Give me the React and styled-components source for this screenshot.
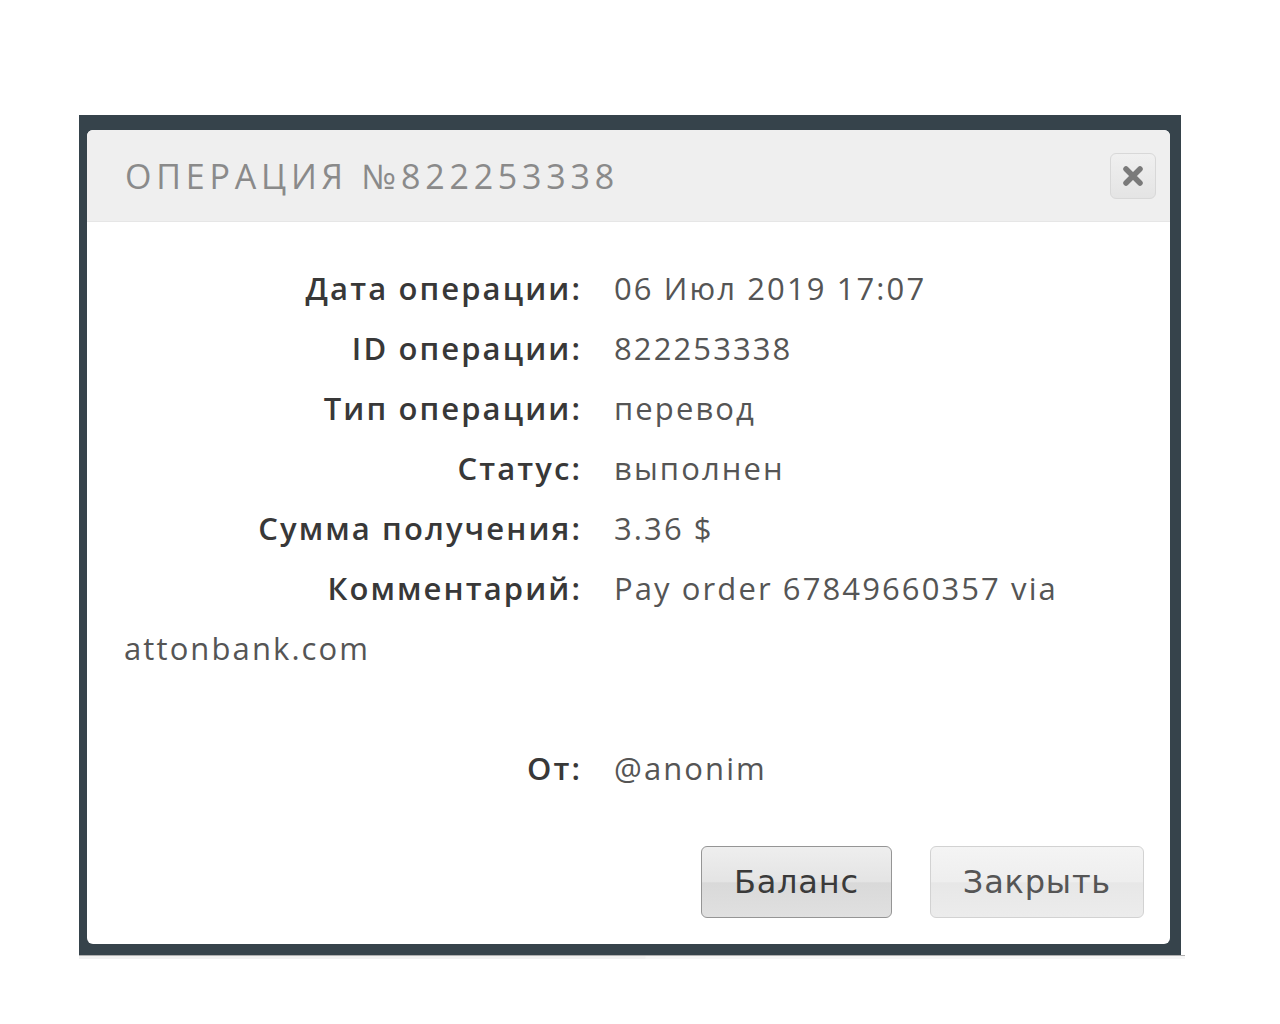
import React from "react";
import styled, { createGlobalStyle } from "styled-components";

const Global = createGlobalStyle`
  html, body { margin: 0; padding: 0; background: #ffffff; }
  body { font-family: "Open Sans", "Noto Sans", sans-serif; }
`;

const Page = styled.div`
  width: 1280px;
  height: 1024px;
  padding-top: 115px;
  box-sizing: border-box;
`;

const Frame = styled.div`
  margin-left: 79px;
  width: 1102px;
  height: 840px;
  box-sizing: border-box;
  background: #36434b;
  padding: 15px 11px 11px 8px;
  display: flex;
`;

const Underline = styled.div`
  margin-left: 79px;
  width: 1106px;
  height: 4px;
  background: linear-gradient(to right, #f1f1f1 0, #f1f1f1 566px, #f6f6f6 567px);
  border-top: 1px solid #b0b0b0;
  box-sizing: border-box;
`;

const Dialog = styled.div`
  flex: 1;
  background: #ffffff;
  border-radius: 6px;
  display: flex;
  flex-direction: column;
  overflow: hidden;
`;

const Header = styled.div`
  height: 92px;
  background: #efefef;
  border-bottom: 1px solid #e6e6e6;
  box-sizing: border-box;
  display: flex;
  align-items: center;
  justify-content: space-between;
  padding: 0 14px 0 38px;
`;

const Title = styled.h2`
  margin: 0;
  font-family: "Open Sans", sans-serif;
  font-weight: 400;
  font-size: 34px;
  letter-spacing: 4.8px;
  color: #8a8a8a;
`;

const CloseBtn = styled.button`
  width: 46px;
  height: 46px;
  border-radius: 6px;
  border: 1px solid #d8d8d8;
  background: linear-gradient(#f0f0f0, #e4e4e4);
  display: flex;
  align-items: center;
  justify-content: center;
  padding: 0;
  cursor: pointer;
`;

const Body = styled.div`
  flex: 1;
  padding: 36px 26px 26px 37px;
  display: flex;
  flex-direction: column;
`;

const Info = styled.div`
  font-size: 31px;
  line-height: 60px;
  letter-spacing: 2.1px;
  color: #555;
`;

const Row = styled.div`
  min-height: 60px;
`;

const Label = styled.span`
  display: inline-block;
  width: 458px;
  text-align: right;
  font-weight: 600;
  color: #383838;
  margin-right: 32px;
`;

const Value = styled.span`
  color: #555;
`;

const Footer = styled.div`
  margin-top: 48px;
  display: flex;
  justify-content: flex-end;
  gap: 38px;
`;

const Button = styled.button`
  height: 72px;
  padding: 0 32px;
  border-radius: 6px;
  border: 1px solid ${(p) => (p.$primary ? "#959595" : "#d2d2d2")};
  background: ${(p) =>
    p.$primary
      ? "linear-gradient(#eeeeee 0%, #e4e4e4 50%, #d9d9d9 51%, #e0e0e0 100%)"
      : "linear-gradient(#f4f4f4 0%, #eeeeee 50%, #e7e7e7 51%, #ececec 100%)"};
  font-family: "DejaVu Sans", "Open Sans", sans-serif;
  font-size: 32px;
  letter-spacing: 0.8px;
  color: ${(p) => (p.$primary ? "#3a3a3a" : "#555")};
  cursor: pointer;
`;

const rows = [
  ["Дата операции:", "06 Июл 2019 17:07"],
  ["ID операции:", "822253338"],
  ["Тип операции:", "перевод"],
  ["Статус:", "выполнен"],
  ["Сумма получения:", "3.36 $"],
  ["Комментарий:", "Pay order 67849660357 via attonbank.com"],
];

export default function App() {
  return (
    <Page>
      <Global />
      <Frame>
        <Dialog>
          <Header>
            <Title>ОПЕРАЦИЯ №822253338</Title>
            <CloseBtn aria-label="close">
              <svg width="22" height="22" viewBox="0 0 22 22">
                <path d="M4 4 L18 18 M18 4 L4 18" stroke="#7a7a7a" strokeWidth="5.5" strokeLinecap="round" />
              </svg>
            </CloseBtn>
          </Header>
          <Body>
            <Info>
              {rows.map(([l, v]) => (
                <Row key={l}>
                  <Label>{l}</Label>
                  <Value>{v}</Value>
                </Row>
              ))}
              <Row />
              <Row>
                <Label>От:</Label>
                <Value>@anonim</Value>
              </Row>
            </Info>
            <Footer>
              <Button $primary>Баланс</Button>
              <Button>Закрыть</Button>
            </Footer>
          </Body>
        </Dialog>
      </Frame>
      <Underline />
    </Page>
  );
}
